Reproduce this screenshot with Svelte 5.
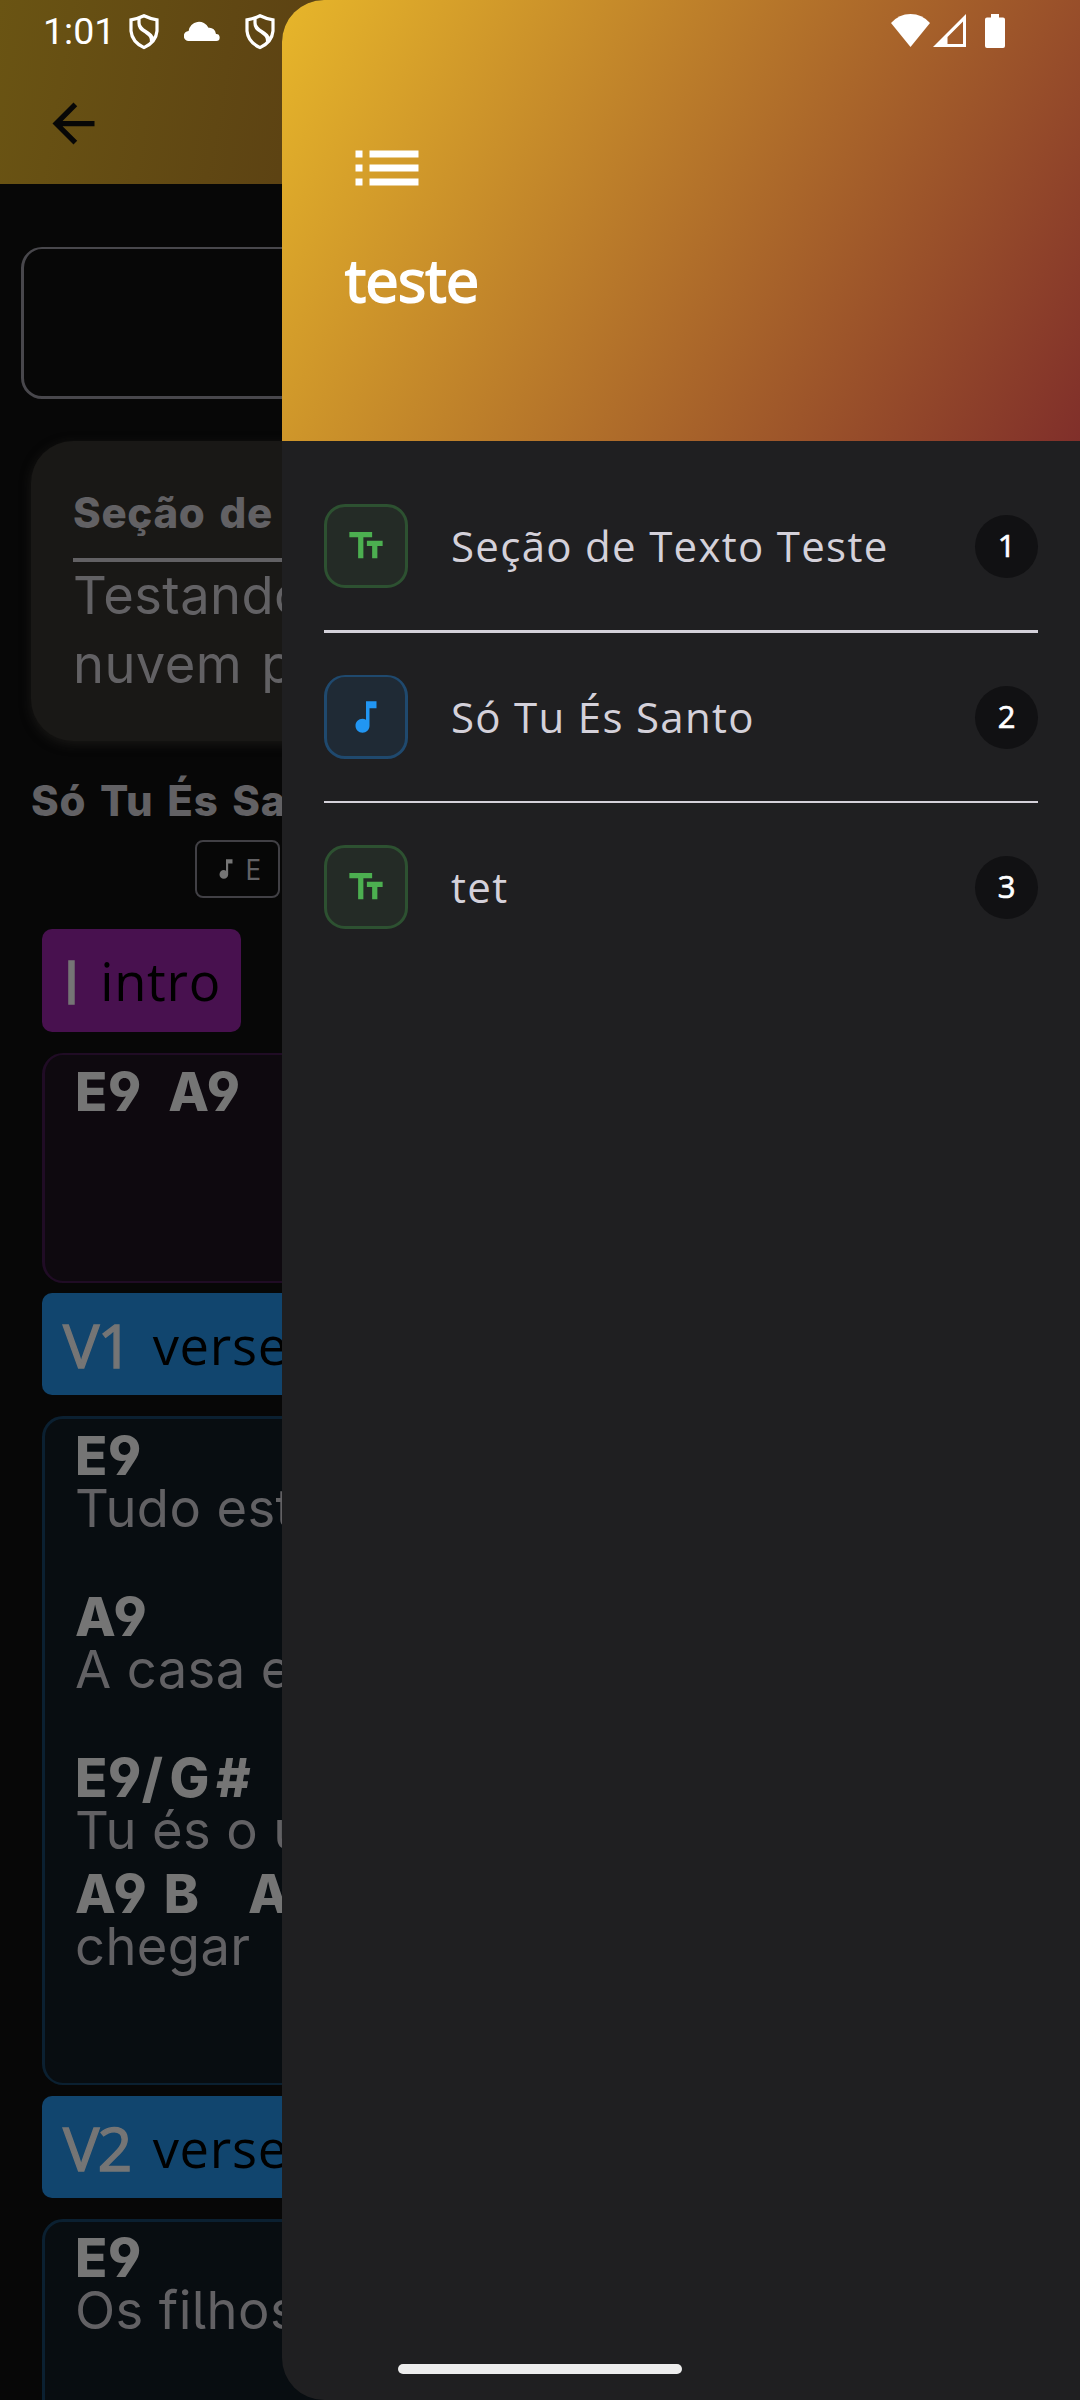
<script>
  const items = [
    { kind: 'text', title: 'Seção de Texto Teste' },
    { kind: 'music', title: 'Só Tu És Santo' },
    { kind: 'text', title: 'tet' }
  ];
  const sections = [
    { kind: 'intro', tag: 'I', name: 'intro', lines: [{ chords: 'E9  A9' }] },
    {
      kind: 'verse full', tag: 'V1', name: 'verse',
      lines: [
        { chords: 'E9', lyric: 'Tudo está', gap: true },
        { chords: 'A9', lyric: 'A casa está', gap: true },
        { chords: 'E9', bass: '/G#', lyric: 'Tu és o único' },
        { chords: 'A9 B   A', lyric: 'chegar' }
      ]
    },
    {
      kind: 'verse last', tag: 'V2', name: 'verse',
      lines: [{ chords: 'E9', lyric: 'Os filhos', gap: true }, { chords: 'A9' }]
    }
  ];
</script>

{#snippet note()}
  <svg viewBox="0 0 24 24"><path fill="currentColor" d="M12 3v10.55c-.59-.34-1.27-.55-2-.55-2.21 0-4 1.79-4 4s1.79 4 4 4 4-1.79 4-4V7h4V3h-6z" /></svg>
{/snippet}

{#snippet shield()}
  <svg class="shield" viewBox="0 0 30 36">
    <path d="M15 1.800 Q21 4.800 28 5.800 V17 Q27 28 15 33.600 Q3 28 2 17 V5.800 Q9 4.800 15 1.800Z" />
    <path d="M10 4V9C10 18 24 17.500 24 27M10 9C10 14 12 15 16.500 18C20 20.500 23 22 22.500 28" />
  </svg>
{/snippet}

<div class="screen">
  <main class="page">
    <header class="appbar">
      <svg class="back" viewBox="0 0 24 24"><path d="M20 11H7.83l5.59-5.59L12 4l-8 8 8 8 1.41-1.41L7.83 13H20v-2z" /></svg>
    </header>
    <div class="field"></div>
    <section class="note-card">
      <h2>Seção de Texto</h2>
      <p>Testando a<br />nuvem para</p>
    </section>
    <h2 class="song">Só Tu És Santo</h2>
    <div class="key"><span class="key-icon">{@render note()}</span><span>E</span></div>
    {#each sections as s}
      <div class="chip {s.kind}"><b>{s.tag}</b><span>{s.name}</span></div>
      <div class="block {s.kind}">
        {#each s.lines as l}
          <div class="chords">{l.chords}{#if l.bass}<span class="bass">{l.bass}</span>{/if}</div>
          {#if l.lyric}<div class="lyric" class:gap={l.gap}>{l.lyric}</div>{/if}
        {/each}
      </div>
    {/each}
  </main>

  <aside class="drawer">
    <header class="head">
      <svg class="list-icon" viewBox="0 0 24 24"><path d="M3 13h2v-2H3v2zm0 4h2v-2H3v2zm0-8h2V7H3v2zm4 4h14v-2H7v2zm0 4h14v-2H7v2zM7 7v2h14V7H7z" /></svg>
      <h1>teste</h1>
    </header>
    <ul>
      {#each items as item, i}
        <li>
          <span class="tile {item.kind}">
            {#if item.kind === 'text'}
              <svg viewBox="0 0 24 24"><path fill="currentColor" d="M2.5 4v3h5v12h3V7h5V4h-13zm19 5h-9v3h3v7h3v-7h3V9z" /></svg>
            {:else}
              {@render note()}
            {/if}
          </span>
          <span class="title">{item.title}</span>
          <span class="badge">{i + 1}</span>
        </li>
      {/each}
    </ul>
  </aside>

  <div class="status">
    <span class="time">1:01</span>
    {@render shield()}
    <svg class="cloud" viewBox="0 0 36 20"><path d="M5 20A5 5 0 0 1 4.600 10A10.500 10.500 0 0 1 24.500 6.800A6.500 6.500 0 0 1 32 13A3.500 3.500 0 0 1 32.300 20Z" /></svg>
    {@render shield()}
    <span class="grow"></span>
    <svg class="wifi" viewBox="0 0 39 33"><path d="M19.500 33L0 9Q8 0 19.500 0T39 9Z" /></svg>
    <svg class="signal" viewBox="0 0 33 33"><path fill-rule="evenodd" d="M0 33L33 0V33ZM14.500 30H30V7.500L14.500 23Z" /></svg>
    <svg class="battery" viewBox="0 0 20 34"><path d="M6 0h8v3.500h4a2 2 0 0 1 2 2V32a2 2 0 0 1-2 2H2a2 2 0 0 1-2-2V5.500a2 2 0 0 1 2-2h4z" /></svg>
  </div>
  <div class="home"></div>
</div>

<style>
  :global(body) { margin: 0; background: #070707; }
  * { box-sizing: border-box; }
  h1, h2, p, ul { margin: 0; padding: 0; }
  svg { display: block; fill: currentColor; }
  .screen { position: relative; width: 1080px; height: 2400px; overflow: hidden; background: #070707; font-family: 'Open Sans', sans-serif; }

  .page { display: flex; flex-direction: column; height: 2400px; overflow: hidden; font-family: Inter, sans-serif; font-feature-settings: 'cv04', 'cv03', 'cv05'; color: #626164; }
  .page > * { flex: none; }
  .appbar { height: 184px; padding: 92px 0 0 42px; background: linear-gradient(99.7deg, #6a5413, #3b1713); color: #070707; }
  .back { width: 63px; height: 63px; }
  .field { height: 152px; margin: 63px 21px 0; border: solid #48474c; border-width: 2px 3px 3px; border-radius: 21px; }
  .note-card { height: 300px; margin: 42px 31px 0; padding: 42px 42px 0; border-radius: 42px; background: #191816; box-shadow: 0 3px 11px #191816; }
  h2 { font-size: 42px; font-weight: 800; letter-spacing: 0.7px; word-spacing: 4px; white-space: nowrap; }
  .note-card h2 { height: 79px; line-height: 59px; border-bottom: 4px solid #626164; }
  .note-card p { margin-top: -1px; font-size: 52.500px; line-height: 69px; letter-spacing: 0.4px; word-spacing: 4px; white-space: nowrap; }
  .song { margin: 30px 0 0 31px; height: 60px; line-height: 60px; }
  .key { display: flex; align-items: center; width: 85px; height: 58px; margin: 9px 0 0 195px; padding-left: 16px; border: 2px solid #414045; border-radius: 8px; font: 400 29px/54px 'Open Sans', sans-serif; }
  .key-icon { width: 26px; margin-right: 6px; color: #757575; }

  .chip { display: flex; align-items: center; height: 102px; margin: 10px 42px 0; padding: 2px 0 0 21px; border-radius: 10px; font: 400 52.500px/100px 'Open Sans', sans-serif; letter-spacing: 0.7px; color: #000; background: #11456e; }
  .chip b { margin-right: 22px; font-size: 61px; font-weight: 400; letter-spacing: -1.800px; -webkit-text-stroke: 1.400px #757575; color: #757575; }
  .chip.intro { width: 199px; height: 103px; margin-top: 31px; padding-top: 0; background: #48114f; }
  .chip.last { margin-top: 11px; }
  .block { margin: 21px 42px 0; padding: 11px 0 0 30px; border: 3px solid #0b2031; border-radius: 21px; background: #080d11; }
  .block.intro { height: 230px; border-width: 2px 3px; border-color: #200c25; background: #0e090f; }
  .block.full { height: 669px; border-bottom-width: 2px; }
  .block.last { height: 300px; padding-top: 10px; }
  .chords { height: 52px; line-height: 52px; font-size: 53px; font-weight: 800; letter-spacing: 0.6px; word-spacing: 4px; white-space: pre; color: #757575; }
  .intro .chords { word-spacing: 1px; }
  .bass { letter-spacing: 6.500px; }
  .lyric { height: 64px; line-height: 52px; font-size: 52.500px; letter-spacing: 0.4px; white-space: pre; }
  .lyric.gap { height: 109px; }
  .last .lyric.gap { height: 111px; }

  .drawer { position: absolute; top: 0; right: 0; width: 798px; height: 2400px; overflow: hidden; border-radius: 42px 0 0 42px; background: #1f1f21; }
  .head { height: 441px; padding: 126px 63px 0; background: linear-gradient(118.9deg, #e7b62a, #802f2a); color: #fff; }
  .list-icon { width: 84px; height: 84px; }
  h1 { margin-top: 27px; font-size: 59px; line-height: 84px; font-weight: 400; letter-spacing: -0.600px; -webkit-text-stroke: 1.900px #fff; }
  ul { padding: 42px 42px 0; list-style: none; }
  li { display: flex; align-items: center; padding: 42px 0; border-bottom: 2px solid #d4d1da; }
  li:first-child { padding-top: 21px; border-bottom-width: 3px; }
  li:last-child { border: 0; }
  .tile { display: grid; place-items: center; width: 84px; height: 84px; margin-right: 43px; border: 3px solid; border-radius: 21px; }
  .tile svg { width: 42px; height: 42px; }
  .tile.text { color: #4caf50; border-color: #2d5131; background: #242b26; }
  .tile.music { color: #2196f3; border-color: #1f496e; border-width: 2px 3px 3px; background: #1f2a35; }
  .title { flex: 1; padding-bottom: 2px; font-size: 42px; letter-spacing: 1.300px; color: #d4d1da; white-space: nowrap; }
  .badge { width: 63px; height: 63px; border-radius: 50%; background: #111113; color: #fff; text-align: center; font-size: 31px; font-weight: 400; line-height: 61px; -webkit-text-stroke: 0.7px #fff; }

  .status { position: absolute; top: 0; left: 0; display: flex; align-items: flex-start; width: 1080px; padding: 14px 75px 0 43px; color: #fff; }
  .time { width: 86px; font: 400 37.500px/35px Roboto, sans-serif; }
  .shield { width: 30px; height: 36px; fill: none; stroke: currentColor; stroke-width: 3.200; }
  .cloud { width: 36px; height: 20px; margin: 7px 25px 0; }
  .grow { flex: 1; }
  .wifi { width: 39px; height: 33px; }
  .signal { width: 33px; height: 33px; margin: 0 19px 0 3px; }
  .battery { width: 20px; height: 34px; }
  .home { position: absolute; left: 398px; top: 2364px; width: 284px; height: 10px; border-radius: 5px; background: #ededed; }
</style>
